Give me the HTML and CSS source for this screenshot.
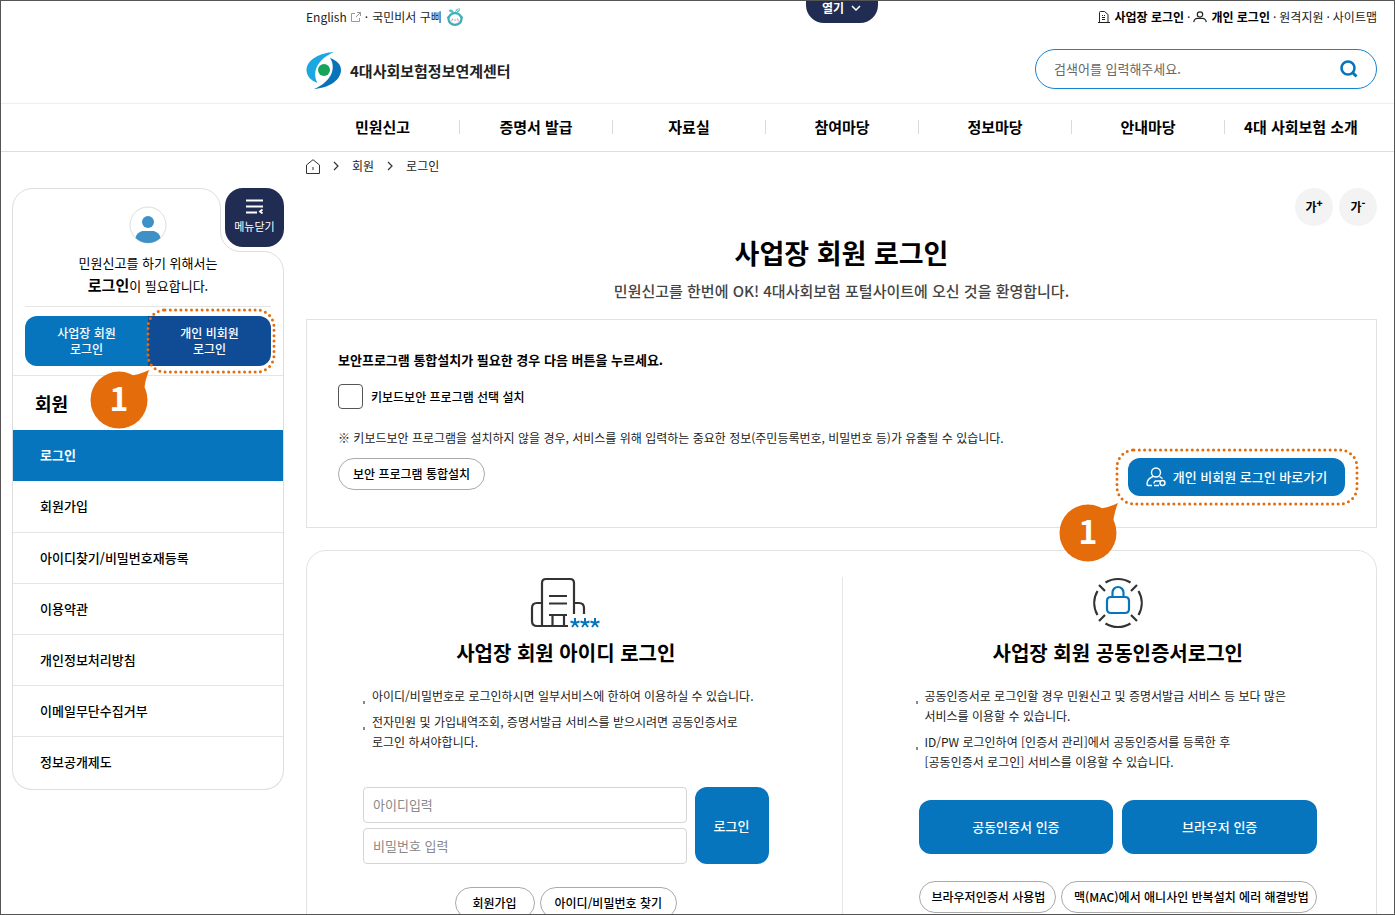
FILE: index.html
```html
<!DOCTYPE html>
<html lang="ko">
<head>
    <meta charset="UTF-8">
    <meta name="viewport" content="width=device-width, initial-scale=1">
    <title>사업장 회원 로그인 - 4대사회보험정보연계센터</title>
    <link rel="stylesheet" href="styles.css">
</head>
<body>
<div class="page">

    <button type="button" class="open-tab">열기
        <svg width="10" height="6" viewBox="0 0 10 6"><path d="M1 1l4 4 4-4" fill="none" stroke="#fff" stroke-width="1.5"/></svg>
    </button>

    <header class="header">
        <div class="util">
            <div class="util-group">
                <a href="#">English
                    <svg width="10" height="10" viewBox="0 0 10 10"><path d="M4 1.5H.5v8h8V6M6 .5h3.5V4M9.5 .5L5 5" fill="none" stroke="#999"/></svg>
                </a>
                <span>·</span>
                <a href="#">국민비서 구삐
                    <svg width="18" height="18" viewBox="0 0 18 18">
                        <path d="M8 5C4 5 2 2.500 3.500 1.500 6 1 8 3 8 5zM9 5c0-3 2-5 5-4.500C14 3.500 12 5 9 5z" fill="#52c5bd"/>
                        <path d="M10 4c1-1.500 2-2 3-2.500" stroke="#fff" fill="none"/>
                        <circle cx="2.500" cy="9.500" r="1.500" fill="#49b4c8"/><circle cx="15.500" cy="9.500" r="1.500" fill="#49b4c8"/>
                        <ellipse cx="9" cy="11" rx="6.500" ry="5.800" fill="#fff" stroke="#3caebb" stroke-width="2.200"/>
                        <path d="M6.500 12v-1.500M11.500 12v-1.500M7.800 11.500l1.200 1 1.200-1" fill="none" stroke="#999" stroke-width=".8"/>
                        <circle cx="5.500" cy="12.500" r="1" fill="#f5b7ae"/><circle cx="12.500" cy="12.500" r="1" fill="#f5b7ae"/>
                    </svg>
                </a>
            </div>
            <div class="util-group right">
                <a href="#" class="strong">
                    <svg width="12" height="12" viewBox="0 0 12 12"><path d="M1.5 11.500V1.500q0-1 1-1h4l3.500 3v8M0 11.500h12M4 4.500h1M6 4.500h1M4 6.500h3M4 8.500h3" fill="none" stroke="#222"/></svg>
                    사업장 로그인</a>
                <span>·</span>
                <a href="#" class="strong">
                    <svg width="14" height="12" viewBox="0 0 14 12"><circle cx="7" cy="3.500" r="2.700" fill="none" stroke="#222" stroke-width="1.200"/><path d="M.7 11.200c.5-3.500 2.500-4 4.300-3.700h4c1.800-.3 3.800.2 4.300 3.700" fill="none" stroke="#222" stroke-width="1.200"/></svg>
                    개인 로그인</a>
                <span>·</span>
                <a href="#">원격지원</a>
                <span>·</span>
                <a href="#">사이트맵</a>
            </div>
        </div>
        <div class="brand">
            <a href="#" class="logo">
                <svg width="36" height="37" viewBox="0 0 36 37">
                    <path d="M28 0C14 1 2 7 .5 17c-.5 7 5 12 11 14C6 21 10 8 28 0z" fill="#1ba7e0"/>
                    <path d="M8 37c14-1 26-8 27-18 .5-7-5-11-11-13 6 9 3 23-16 31z" fill="#0873b9"/>
                    <circle cx="18" cy="18" r="6" fill="#16a45b"/>
                </svg>
                4대사회보험정보연계센터
            </a>
            <form class="search">
                <input type="text" aria-label="검색어" placeholder="검색어를 입력해주세요.">
                <button type="button" aria-label="검색">
                    <svg width="18" height="18" viewBox="0 0 18 18"><circle cx="8" cy="8" r="6.500" fill="none" stroke="#0675bd" stroke-width="2.600"/><path d="M12.500 12.500l4 4" stroke="#0675bd" stroke-width="3"/></svg>
                </button>
            </form>
        </div>
    </header>

    <nav class="gnb">
        <a href="#">민원신고</a>
        <a href="#">증명서 발급</a>
        <a href="#">자료실</a>
        <a href="#">참여마당</a>
        <a href="#">정보마당</a>
        <a href="#">안내마당</a>
        <a href="#">4대 사회보험 소개</a>
    </nav>

    <div class="layout">
        <aside class="sidebar">
            <button type="button" class="menu-close">
                <svg width="18" height="15" viewBox="0 0 18 15"><path d="M0 1.500h17M0 7.500h17M0 13.500h11M16.500 10.500l-2.500 2 2.500 2" fill="none" stroke="#fff" stroke-width="1.800"/></svg>
                메뉴닫기
            </button>
            <div class="user-box">
                <svg class="outline" width="272" height="188" viewBox="0 0 272 188"><path d="M.5 188V20.500a20 20 0 0 1 20-20h168a20 20 0 0 1 20 20v23a20 20 0 0 0 20 20h23a20 20 0 0 1 20 20V188" fill="none" stroke="#ddd"/></svg>
                <svg class="avatar" width="38" height="38" viewBox="0 0 38 38"><circle cx="19" cy="19" r="18" fill="#fff" stroke="#ddd"/><circle cx="19" cy="16" r="6" fill="#3d91c6"/><path d="M6.500 32c1-5 5-7 8-7h9c3 0 7 2 8 7a18 18 0 0 1-25 0z" fill="#3d91c6"/></svg>
                <p>민원신고를 하기 위해서는<br><b>로그인</b>이 필요합니다.</p>
                <div class="user-links">
                    <a href="#">사업장 회원<br>로그인</a>
                    <a href="#" class="personal">개인 비회원<br>로그인
                        <svg class="mark-box" width="130" height="66" viewBox="0 0 130 66"><rect x="2" y="2" width="126" height="62" rx="17"/></svg>
                    </a>
                </div>
                <span class="marker side-marker">
                    <svg width="60" height="60" viewBox="0 0 60 60"><circle cx="29" cy="30" r="28.500"/><path d="M38 6q11-1 21-6-4 10-5 20z"/></svg>
                    <b>1</b>
                </span>
            </div>
            <div class="side-menu">
                <h2>회원</h2>
                <ul>
                    <li><a href="#" class="on">로그인</a></li>
                    <li><a href="#">회원가입</a></li>
                    <li><a href="#">아이디찾기/비밀번호재등록</a></li>
                    <li><a href="#">이용약관</a></li>
                    <li><a href="#">개인정보처리방침</a></li>
                    <li><a href="#">이메일무단수집거부</a></li>
                    <li><a href="#">정보공개제도</a></li>
                </ul>
            </div>
        </aside>

        <main class="content">
            <div class="breadcrumb">
                <svg width="14" height="15" viewBox="0 0 14 15"><path d="M.5 14.500V6L7 .7 13.500 6v8.500zM7 8v3" fill="none" stroke="#333"/></svg>
                <svg width="6" height="10" viewBox="0 0 6 10"><path d="M1 1l4 4-4 4" fill="none" stroke="#333" stroke-width="1.200"/></svg>
                <a href="#">회원</a>
                <svg width="6" height="10" viewBox="0 0 6 10"><path d="M1 1l4 4-4 4" fill="none" stroke="#333" stroke-width="1.200"/></svg>
                <a href="#">로그인</a>
            </div>
            <div class="font-size">
                <button type="button">가<sup>+</sup></button>
                <button type="button">가<sup>-</sup></button>
            </div>
            <h1>사업장 회원 로그인</h1>
            <p class="intro">민원신고를 한번에 OK! 4대사회보험 포털사이트에 오신 것을 환영합니다.</p>

            <section class="security">
                <h2>보안프로그램 통합설치가 필요한 경우 다음 버튼을 누르세요.</h2>
                <div class="check">
                    <input type="checkbox" id="keyboard">
                    <label for="keyboard">키보드보안 프로그램 선택 설치</label>
                </div>
                <p>※ 키보드보안 프로그램을 설치하지 않을 경우, 서비스를 위해 입력하는 중요한 정보(주민등록번호, 비밀번호 등)가 유출될 수 있습니다.</p>
                <button type="button" class="pill">보안 프로그램 통합설치</button>
                <div class="shortcut">
                    <svg class="mark-box" width="244" height="58" viewBox="0 0 244 58"><rect x="2" y="2" width="240" height="54" rx="17"/></svg>
                    <button type="button">
                        <svg width="20" height="20" viewBox="0 0 20 20" fill="none" stroke="#fff" stroke-width="1.400"><circle cx="10" cy="5.500" r="4.500"/><path d="M7 9.500C3 11 1 14 1 17q0 1.500 1.500 1.500H6M13.500 9.500l3 2M14.500 14H10a2.200 2.200 0 0 0-2 2.500M8 18.500h5"/><circle cx="16.500" cy="16" r="2.500"/></svg>
                        개인 비회원 로그인 바로가기
                    </button>
                    <span class="marker">
                        <svg width="60" height="60" viewBox="0 0 60 60"><circle cx="29" cy="30" r="28.500"/><path d="M38 6q11-1 21-6-4 10-5 20z"/></svg>
                        <b>1</b>
                    </span>
                </div>
            </section>

            <div class="login-box">
                <section class="login-col">
                    <svg class="login-icon" width="74" height="52" viewBox="0 0 74 52">
                        <path d="M13 49V6q0-4 4-4h24q4 0 4 4v31M13 26H8q-5 0-5 5v13q0 5 5 5h31M45 26h5q5 0 5 5v6M20 19h18M20 26.500h18M20 38h18M23.500 38v11M35 38v11" fill="none" stroke="#333" stroke-width="2.200"/>
                        <path d="M46 41v5l-4.500-1.500M46 46l4.500-1.500M46 46l-3 4M46 46l3 4M56 41v5l-4.500-1.500M56 46l4.500-1.500M56 46l-3 4M56 46l3 4M66 41v5l-4.500-1.500M66 46l4.500-1.500M66 46l-3 4M66 46l3 4" fill="none" stroke="#0675bd" stroke-width="2"/>
                    </svg>
                    <h2>사업장 회원 아이디 로그인</h2>
                    <ul class="notes">
                        <li>아이디/비밀번호로 로그인하시면 일부서비스에 한하여 이용하실 수 있습니다.</li>
                        <li>전자민원 및 가입내역조회, 증명서발급 서비스를 받으시려면 공동인증서로<br>로그인 하셔야합니다.</li>
                    </ul>
                    <form class="login-form">
                        <div class="fields">
                            <input type="text" aria-label="아이디" placeholder="아이디입력">
                            <input type="password" aria-label="비밀번호" placeholder="비밀번호 입력">
                        </div>
                        <button type="button" class="primary">로그인</button>
                    </form>
                    <div class="pills">
                        <a href="#" class="pill">회원가입</a>
                        <a href="#" class="pill">아이디/비밀번호 찾기</a>
                    </div>
                </section>
                <section class="login-col cert">
                    <svg class="login-icon" width="52" height="52" viewBox="0 0 52 52" fill="none" stroke-width="2.200">
                        <path stroke="#333" d="M13.500 5.500a24 24 0 0 1 25 0M13.500 46.500a24 24 0 0 0 25 0M5.500 14a24 24 0 0 0 0 24M46.500 14a24 24 0 0 1 0 24M7 8l6 6M45 8l-6 6M7 44l6-6M45 44l-6-6"/>
                        <path stroke="#0675bd" d="M20.500 20v-4.500a5.500 5.500 0 0 1 11 0V20M19 20h14q4 0 4 4v8q0 4-4 4H19q-4 0-4-4v-8q0-4 4-4z"/>
                    </svg>
                    <h2>사업장 회원 공동인증서로그인</h2>
                    <ul class="notes">
                        <li>공동인증서로 로그인할 경우 민원신고 및 증명서발급 서비스 등 보다 많은<br>서비스를 이용할 수 있습니다.</li>
                        <li>ID/PW 로그인하여 [인증서 관리]에서 공동인증서를 등록한 후<br>[공동인증서 로그인] 서비스를 이용할 수 있습니다.</li>
                    </ul>
                    <div class="cert-buttons">
                        <button type="button" class="primary">공동인증서 인증</button>
                        <button type="button" class="primary">브라우저 인증</button>
                    </div>
                    <div class="pills">
                        <a href="#" class="pill">브라우저인증서 사용법</a>
                        <a href="#" class="pill">맥(MAC)에서 애니사인 반복설치 에러 해결방법</a>
                    </div>
                </section>
            </div>
        </main>
    </div>
</div>
</body>
</html>
```

FILE: styles.css
```css
* {
    box-sizing: border-box;
}
body {
    margin: 0;
    font-family: "Noto Sans CJK KR", sans-serif;
    font-size: 12px;
    line-height: 20px;
    color: #222;
    background: #fff;
}
h1, h2, p, ul {
    margin: 0;
    padding: 0;
}
ul {
    list-style: none;
}
a {
    color: inherit;
    text-decoration: none;
}
button, input {
    font: inherit;
    color: inherit;
}
button {
    padding: 0;
    border: 0;
    cursor: pointer;
}
svg {
    flex: none;
}

.page {
    position: relative;
    height: 100vh;
    overflow: hidden;
    border: 1px solid #555;
}

/* header */
.open-tab {
    position: absolute;
    top: 0;
    left: calc(50% + 108px);
    width: 72px;
    height: 22px;
    padding-bottom: 8px;
    display: flex;
    align-items: center;
    justify-content: center;
    gap: 7px;
    border-radius: 0 0 18px 18px;
    background: #212c52;
    color: #fff;
    font-weight: bold;
}
.header {
    height: 103px;
    padding: 6px 17px 0 305px;
    border-bottom: 1px solid #eee;
}
.util {
    display: flex;
    justify-content: space-between;
}
.util-group, .util-group a {
    display: flex;
    align-items: center;
    gap: 4px;
}
.util-group.right {
    gap: 3px;
}
.util-group .strong {
    font-weight: bold;
    color: #000;
}
.brand {
    display: flex;
    justify-content: space-between;
    align-items: center;
    margin-top: 21px;
}
.logo {
    display: flex;
    align-items: center;
    gap: 8px;
    padding-top: 4px;
    font-size: 15px;
    font-weight: bold;
}
.search {
    width: 342px;
    height: 40px;
    padding: 0 18px;
    display: flex;
    align-items: center;
    border: 1px solid #1583d0;
    border-radius: 20px;
}
.search input {
    flex: 1;
    padding: 0;
    border: 0;
    outline: 0;
    font-size: 13px;
}
.search input::placeholder {
    color: #666;
}
.search button {
    display: flex;
    background: none;
}

.gnb {
    display: grid;
    grid-template-columns: repeat(7, 1fr);
    height: 48px;
    padding: 0 17px 2px 305px;
    border-bottom: 1px solid #ddd;
    align-items: center;
    text-align: center;
    font-size: 15px;
    font-weight: bold;
    color: #000;
}
.gnb a {
    line-height: 14px;
}
.gnb a + a {
    border-left: 1px solid #d5dce0;
}

/* layout */
.layout {
    display: grid;
    grid-template-columns: 272px minmax(0, 1fr);
    gap: 22px;
    padding: 0 17px 0 11px;
    align-items: start;
}

/* sidebar */
.sidebar {
    position: relative;
    margin-top: 36px;
}
.menu-close {
    position: absolute;
    z-index: 1;
    top: 0;
    right: 0;
    width: 59px;
    height: 59px;
    display: flex;
    flex-direction: column;
    align-items: center;
    justify-content: center;
    gap: 2px;
    border-radius: 18px;
    background: #212c52;
    color: #fff;
    font-size: 11px;
}
.user-box {
    position: relative;
    height: 188px;
    padding: 18px 13px 0;
    border-bottom: 1px solid #e5e5e5;
    text-align: center;
    color: #000;
}
.outline {
    position: absolute;
    top: 0;
    left: 0;
}
.avatar {
    position: relative;
    display: block;
    margin: 0 auto 8px;
}
.user-box p {
    position: relative;
    padding-bottom: 9px;
    border-bottom: 1px solid #e5e5e5;
    font-size: 13px;
    line-height: 22px;
}
.user-box p b {
    font-size: 15px;
}
.user-links {
    position: relative;
    display: grid;
    grid-template-columns: 1fr 1fr;
    margin-top: 9px;
    color: #fff;
    font-weight: 500;
    line-height: 16px;
}
.user-links a {
    height: 50px;
    padding-top: 9px;
    border-radius: 12px 0 0 12px;
    background: #0675bd;
}
.user-links .personal {
    position: relative;
    border-radius: 0 12px 12px 0;
    background: #104b95;
}
.mark-box {
    position: absolute;
    fill: none;
    stroke: #e46c0a;
    stroke-width: 3;
    stroke-linecap: round;
    stroke-dasharray: 0 5.3;
}
.personal .mark-box {
    top: -8px;
    left: -2px;
}
.marker {
    position: absolute;
    z-index: 2;
    display: flex;
    color: #fff;
    fill: #e46c0a;
    font-size: 32px;
}
.marker b {
    position: absolute;
    top: 17px;
    left: 0;
    width: 58px;
    text-align: center;
}
.side-marker {
    top: 182px;
    left: 78px;
}
.side-menu {
    padding-bottom: 2px;
    border: 1px solid #ddd;
    border-top: 0;
    border-radius: 0 0 20px 20px;
    color: #000;
}
.side-menu h2 {
    padding: 13px 22px;
    font-size: 18px;
    line-height: 28px;
}
.side-menu li {
    height: 51px;
}
.side-menu a {
    display: block;
    padding: 14px 27px 16px;
    font-size: 13px;
    font-weight: 500;
    line-height: 21px;
}
.side-menu li + li + li {
    border-top: 1px solid #e5e5e5;
}
.side-menu .on {
    background: #0675bd;
    color: #fff;
    font-weight: bold;
}

/* content */
.breadcrumb {
    display: flex;
    align-items: center;
    gap: 13px;
    height: 28px;
}
.font-size {
    display: flex;
    justify-content: flex-end;
    gap: 6px;
    margin-top: 8px;
}
.font-size button {
    width: 38px;
    height: 38px;
    border-radius: 50%;
    background: #f3f3f3;
    color: #000;
    font-weight: bold;
}
.font-size sup {
    font-size: 10px;
    font-weight: 900;
    line-height: 10px;
}
h1 {
    margin-top: 7px;
    font-size: 27px;
    line-height: 40px;
    text-align: center;
    color: #000;
}
.intro {
    margin-top: 6px;
    font-size: 15px;
    font-weight: 500;
    line-height: 24px;
    text-align: center;
    color: #444;
}
.security {
    position: relative;
    height: 209px;
    margin-top: 16px;
    padding: 29px 31px;
    border: 1px solid #e2e2e2;
}
.security h2 {
    font-size: 13px;
    line-height: 22px;
    color: #000;
}
.check {
    display: flex;
    align-items: center;
    gap: 8px;
    margin: 13px 0 19px;
    font-weight: 500;
    color: #000;
}
.check input {
    appearance: none;
    width: 25px;
    height: 25px;
    margin: 0;
    border: 1px solid #555;
    border-radius: 4px;
}
.pill {
    display: inline-block;
    height: 32px;
    padding: 0 14px;
    border: 1px solid #aaa;
    border-radius: 16px;
    background: #fff;
    color: #000;
    font-weight: 500;
    line-height: 30px;
    text-align: center;
}
.security .pill {
    margin-top: 10px;
}
.shortcut {
    position: absolute;
    right: 31px;
    bottom: 31px;
}
.shortcut button {
    width: 217px;
    height: 38px;
    display: flex;
    align-items: center;
    justify-content: center;
    gap: 7px;
    border-radius: 12px;
    background: #0675bd;
    color: #fff;
    font-size: 13px;
    font-weight: 500;
}
.shortcut .mark-box {
    top: -10px;
    left: -13px;
}
.shortcut .marker {
    top: 45px;
    left: -69px;
}

/* login box */
.login-box {
    display: grid;
    grid-template-columns: repeat(2, minmax(0, 1fr));
    margin-top: 22px;
    padding: 26px 0;
    border: 1px solid #e2e2e2;
    border-radius: 20px;
}
.login-col {
    padding: 0 73px 0 56px;
}
.cert {
    border-left: 1px solid #e5e5e5;
    padding: 0 59px 0 76px;
}
.login-icon {
    display: block;
    margin: 0 auto;
}
.login-col h2 {
    margin: 8px 0 17px;
    font-size: 20px;
    line-height: 32px;
    text-align: center;
    white-space: nowrap;
    color: #000;
}
.notes li {
    position: relative;
    padding-left: 9px;
    margin-bottom: 6px;
    white-space: nowrap;
}
.cert .notes li {
    padding-left: 6px;
}
.notes li::before {
    content: "";
    position: absolute;
    top: 15px;
    left: 0;
    width: 2px;
    height: 3px;
    background: #888;
}
.cert .notes li::before {
    left: -3px;
}
.login-form {
    display: flex;
    gap: 8px;
    margin-top: 35px;
}
.fields {
    display: grid;
    gap: 5px;
    flex: 1;
}
.fields input {
    width: 100%;
    height: 36px;
    padding: 0 9px 2px;
    border: 1px solid #d5d5d5;
    border-radius: 4px;
    font-size: 13px;
}
.fields input::placeholder {
    color: #888;
}
.primary {
    border-radius: 12px;
    background: #0675bd;
    color: #fff;
    font-size: 13px;
    font-weight: 500;
}
.login-form .primary {
    width: 74px;
}
.cert-buttons {
    display: grid;
    grid-template-columns: 1fr 1fr;
    gap: 9px;
    margin-top: 28px;
}
.cert-buttons .primary {
    height: 54px;
}
.pills {
    display: flex;
    justify-content: center;
    gap: 5px;
    margin-top: 23px;
}
.pills .pill {
    min-width: 80px;
}
.cert .pills {
    margin-top: 27px;
    white-space: nowrap;
}
.cert .pill {
    padding: 0 12px;
}
```
